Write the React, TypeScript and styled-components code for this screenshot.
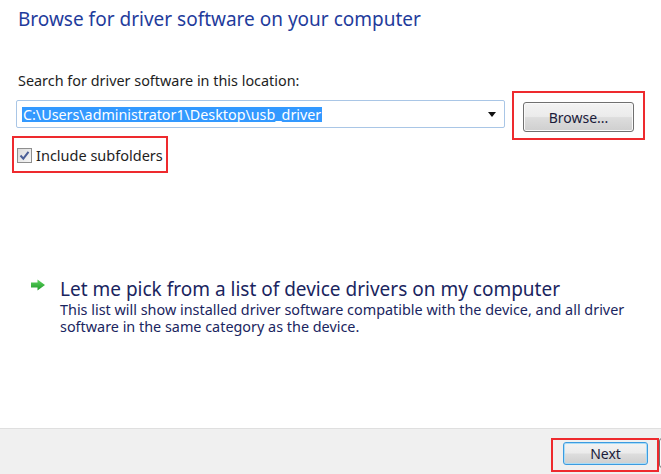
import styled, { createGlobalStyle } from 'styled-components';

const GlobalStyle = createGlobalStyle`
  html, body {
    margin: 0;
    padding: 0;
    background: #ffffff;
  }
  body {
    font-family: "Noto Sans", "Open Sans", sans-serif;
  }
`;

const Window = styled.div`
  width: 661px;
  height: 474px;
  display: flex;
  flex-direction: column;
  background: #ffffff;
  overflow: hidden;
`;

const Main = styled.div`
  flex: 1;
  display: flex;
  flex-direction: column;
  padding: 6px 0 0 12px;
`;

const Heading = styled.h1`
  margin: 0 0 0 6px;
  font-size: 19px;
  font-weight: 400;
  color: #1f3c9c;
  line-height: 26px;
`;

const FieldLabel = styled.div`
  margin: 40px 0 0 6px;
  font-size: 14.4px;
  color: #1e1e1e;
  line-height: 18px;
`;

const PathRow = styled.div`
  display: flex;
  align-items: flex-start;
  margin-top: 1px;
`;

const Combo = styled.div`
  width: 489px;
  height: 28px;
  box-sizing: border-box;
  margin: 9px 0 0 4px;
  border: 1px solid #a9c6e6;
  border-radius: 2px;
  display: flex;
  align-items: center;
  padding: 0 8px 0 5px;
`;

const Selected = styled.span`
  background: #3399ff;
  color: #ffffff;
  font-size: 14.3px;
  line-height: 15px;
  padding: 0 1px;
`;

const DropArrow = styled.span`
  margin-left: auto;
  width: 0;
  height: 0;
  border-left: 4.5px solid transparent;
  border-right: 4.5px solid transparent;
  border-top: 5px solid #111111;
`;

const Highlight = styled.div<{ $pad: string }>`
  border: 2px solid #ee2a2e;
  padding: ${p => p.$pad};
  display: flex;
  align-items: center;
`;

const Button = styled.button<{ $width: number; $default?: boolean }>`
  width: ${p => p.$width}px;
  height: ${p => (p.$default ? 23 : 30)}px;
  box-sizing: border-box;
  border: 1px solid ${p => (p.$default ? '#3c9be0' : '#707070')};
  border-radius: 3px;
  background: linear-gradient(#f3f3f3 0%, #ebebeb 48%, #dddddd 52%, #cfcfcf 100%);
  box-shadow: inset 0 0 0 1px ${p => (p.$default ? '#a8dcf7' : '#fafafa')};
  font-family: "Noto Sans", "Open Sans", sans-serif;
  font-size: 14px;
  color: #1b1b3a;
  padding: 0;
  flex-shrink: 0;
`;

const CheckRow = styled.label`
  display: flex;
  align-items: center;
  gap: 4px;
  font-size: 14.5px;
  color: #1e1e1e;
`;

const CheckBox = styled.span`
  width: 15px;
  height: 15px;
  box-sizing: border-box;
  border: 1px solid #8f8f8f;
  background: linear-gradient(135deg, #dcdcdc, #f6f6f6);
  display: flex;
  align-items: center;
  justify-content: center;
`;

const CommandLink = styled.div`
  display: flex;
  align-items: flex-start;
  gap: 14px;
  margin: 104px 0 0 18px;
`;

const LinkIcon = styled.div`
  padding-top: 2px;
  & > svg {
    display: block;
  }
`;

const LinkBody = styled.div`
  display: flex;
  flex-direction: column;
  color: #1a2560;
`;

const LinkTitle = styled.div`
  font-size: 19px;
  line-height: 24px;
`;

const LinkNote = styled.div`
  font-size: 14.4px;
  line-height: 17px;
  width: 580px;
`;

const Footer = styled.div`
  height: 46px;
  box-sizing: border-box;
  border-top: 1px solid #dfdfdf;
  background: #f0f0f0;
  display: flex;
  align-items: flex-end;
  justify-content: flex-end;
  padding-bottom: 2px;
`;

const Cancel = styled(Button)`
  margin-right: -83px;
  align-self: center;
  margin-top: 4px;
`;

export default function App() {
  return (
    <Window>
      <GlobalStyle />
      <Main>
        <Heading>Browse for driver software on your computer</Heading>
        <FieldLabel>Search for driver software in this location:</FieldLabel>
        <PathRow>
          <Combo>
            <Selected>C:\Users\administrator1\Desktop\usb_driver</Selected>
            <DropArrow />
          </Combo>
          <Highlight $pad="9px 9px 6px" style={{ marginLeft: 7 }}>
            <Button $width={111}>Browse...</Button>
          </Highlight>
        </PathRow>
        <Highlight $pad="7px 3px 6px 3px" style={{ alignSelf: 'flex-start', marginTop: -4 }}>
          <CheckRow>
            <CheckBox>
              <svg width="11" height="11" viewBox="0 0 11 11">
                <path d="M1.5 5.5 L4.3 8.6 L9.5 1.8" fill="none" stroke="#4b5f97" strokeWidth="2" />
              </svg>
            </CheckBox>
            Include subfolders
          </CheckRow>
        </Highlight>
        <CommandLink>
          <LinkIcon>
            <svg width="16" height="12" viewBox="0 0 16 12">
              <defs>
                <linearGradient id="g" x1="0" y1="0" x2="0" y2="1">
                  <stop offset="0" stopColor="#5fd45f" />
                  <stop offset="1" stopColor="#1f9a2a" />
                </linearGradient>
              </defs>
              <path d="M1 3.5 H7.5 V0.5 L15 6 L7.5 11.5 V8.5 H1 Z" fill="url(#g)" />
            </svg>
          </LinkIcon>
          <LinkBody>
            <LinkTitle>Let me pick from a list of device drivers on my computer</LinkTitle>
            <LinkNote>
              This list will show installed driver software compatible with the device, and all driver
              software in the same category as the device.
            </LinkNote>
          </LinkBody>
        </CommandLink>
      </Main>
      <Footer>
        <Highlight $pad="2px 9px 5px 10px">
          <Button $width={85} $default>Next</Button>
        </Highlight>
        <Cancel $width={85} aria-label="Cancel" />
      </Footer>
    </Window>
  );
}
